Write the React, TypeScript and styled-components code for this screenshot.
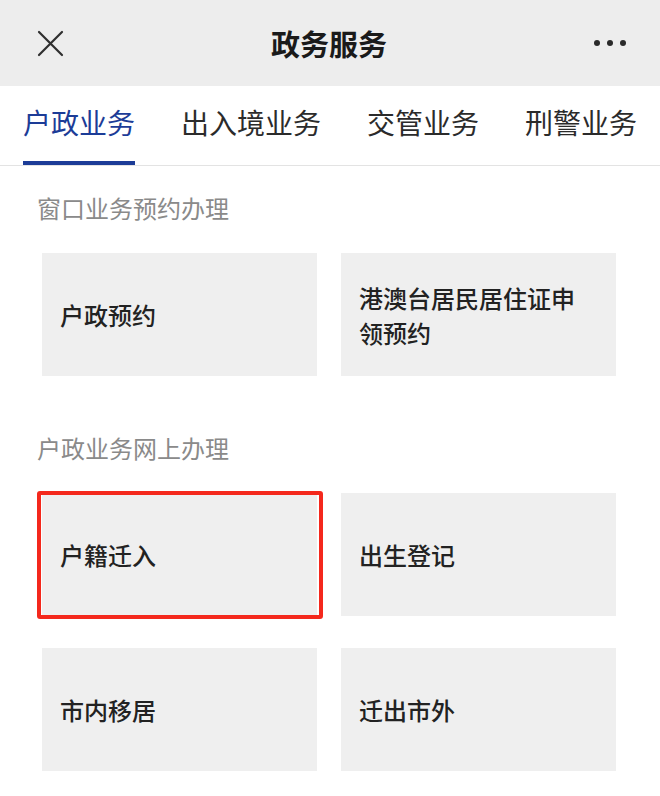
import React from "react";
import styled, { createGlobalStyle } from "styled-components";

const GlobalStyle = createGlobalStyle`
  html, body {
    margin: 0;
    padding: 0;
    background: #ffffff;
  }
  body {
    font-family: "Noto Sans CJK SC", "Noto Sans", sans-serif;
    color: #222222;
  }
`;

const Page = styled.div`
  width: 660px;
  min-height: 796px;
  background: #ffffff;
`;

const Header = styled.header`
  height: 86px;
  background: #ededed;
  display: grid;
  grid-template-columns: 120px 1fr 120px;
  align-items: center;
`;

const CloseButton = styled.button`
  justify-self: start;
  margin-left: 36px;
  width: 28px;
  height: 28px;
  padding: 0;
  border: none;
  background: transparent;
  display: flex;
  align-items: center;
  justify-content: center;
`;

const Title = styled.h1`
  margin: 0;
  text-align: center;
  font-size: 29px;
  font-weight: 700;
  color: #1a1a1a;
  transform: translateX(-1px);
`;

const MoreButton = styled.button`
  justify-self: end;
  margin-right: 34px;
  padding: 0;
  border: none;
  background: transparent;
  display: flex;
  gap: 7px;
  align-items: center;
`;

const Dot = styled.span`
  width: 6px;
  height: 6px;
  border-radius: 50%;
  background: #2a2a2a;
`;

const TabBar = styled.nav`
  display: flex;
  gap: 46px;
  padding-left: 23px;
  border-bottom: 1px solid #e3e3e3;
`;

const Tab = styled.div<{ $active?: boolean }>`
  box-sizing: border-box;
  height: 79px;
  padding-top: 16px;
  font-size: 28px;
  line-height: 40px;
  white-space: nowrap;
  color: ${(p) => (p.$active ? "#1c3c97" : "#2b2b2b")};
  border-bottom: 4px solid ${(p) => (p.$active ? "#1c3c97" : "transparent")};
`;

const Section = styled.section<{ $first?: boolean }>`
  padding: ${(p) => (p.$first ? "25px" : "55px")} 43px 0 42px;
`;

const SectionTitle = styled.h2`
  margin: 0 0 28px -5px;
  font-size: 24px;
  font-weight: 400;
  line-height: 34px;
  color: #8a8a8a;
`;

const Grid = styled.div`
  display: grid;
  grid-template-columns: 275px 275px;
  column-gap: 24px;
  row-gap: 32px;
`;

const Card = styled.div<{ $marked?: boolean }>`
  position: relative;
  box-sizing: border-box;
  height: 123px;
  padding: 0 18px;
  background: #efefef;
  display: flex;
  align-items: center;
  font-size: 24px;
  font-weight: 500;
  line-height: 35px;
  color: #222222;

  ${(p) =>
    p.$marked &&
    `
    &::after {
      content: "";
      position: absolute;
      left: -5px;
      right: -6px;
      top: -2px;
      bottom: -3px;
      border: 4px solid #f4281c;
      border-radius: 3px;
      pointer-events: none;
    }
  `}
`;

const CloseIcon = () => (
  <svg width="27" height="27" viewBox="0 0 27 27" fill="none">
    <path d="M2 2 L25 25 M25 2 L2 25" stroke="#2f2f2f" strokeWidth="2.2" strokeLinecap="round" />
  </svg>
);

const tabs = ["户政业务", "出入境业务", "交管业务", "刑警业务"];

const sections = [
  {
    title: "窗口业务预约办理",
    items: ["户政预约", "港澳台居民居住证申领预约"],
  },
  {
    title: "户政业务网上办理",
    items: ["户籍迁入", "出生登记", "市内移居", "迁出市外"],
  },
];

export default function App() {
  return (
    <Page>
      <GlobalStyle />
      <Header>
        <CloseButton aria-label="关闭">
          <CloseIcon />
        </CloseButton>
        <Title>政务服务</Title>
        <MoreButton aria-label="更多">
          <Dot />
          <Dot />
          <Dot />
        </MoreButton>
      </Header>
      <TabBar>
        {tabs.map((t, i) => (
          <Tab key={t} $active={i === 0}>
            {t}
          </Tab>
        ))}
      </TabBar>
      {sections.map((s, si) => (
        <Section key={s.title} $first={si === 0}>
          <SectionTitle>{s.title}</SectionTitle>
          <Grid>
            {s.items.map((item) => (
              <Card key={item} $marked={item === "户籍迁入"}>
                {item}
              </Card>
            ))}
          </Grid>
        </Section>
      ))}
    </Page>
  );
}
